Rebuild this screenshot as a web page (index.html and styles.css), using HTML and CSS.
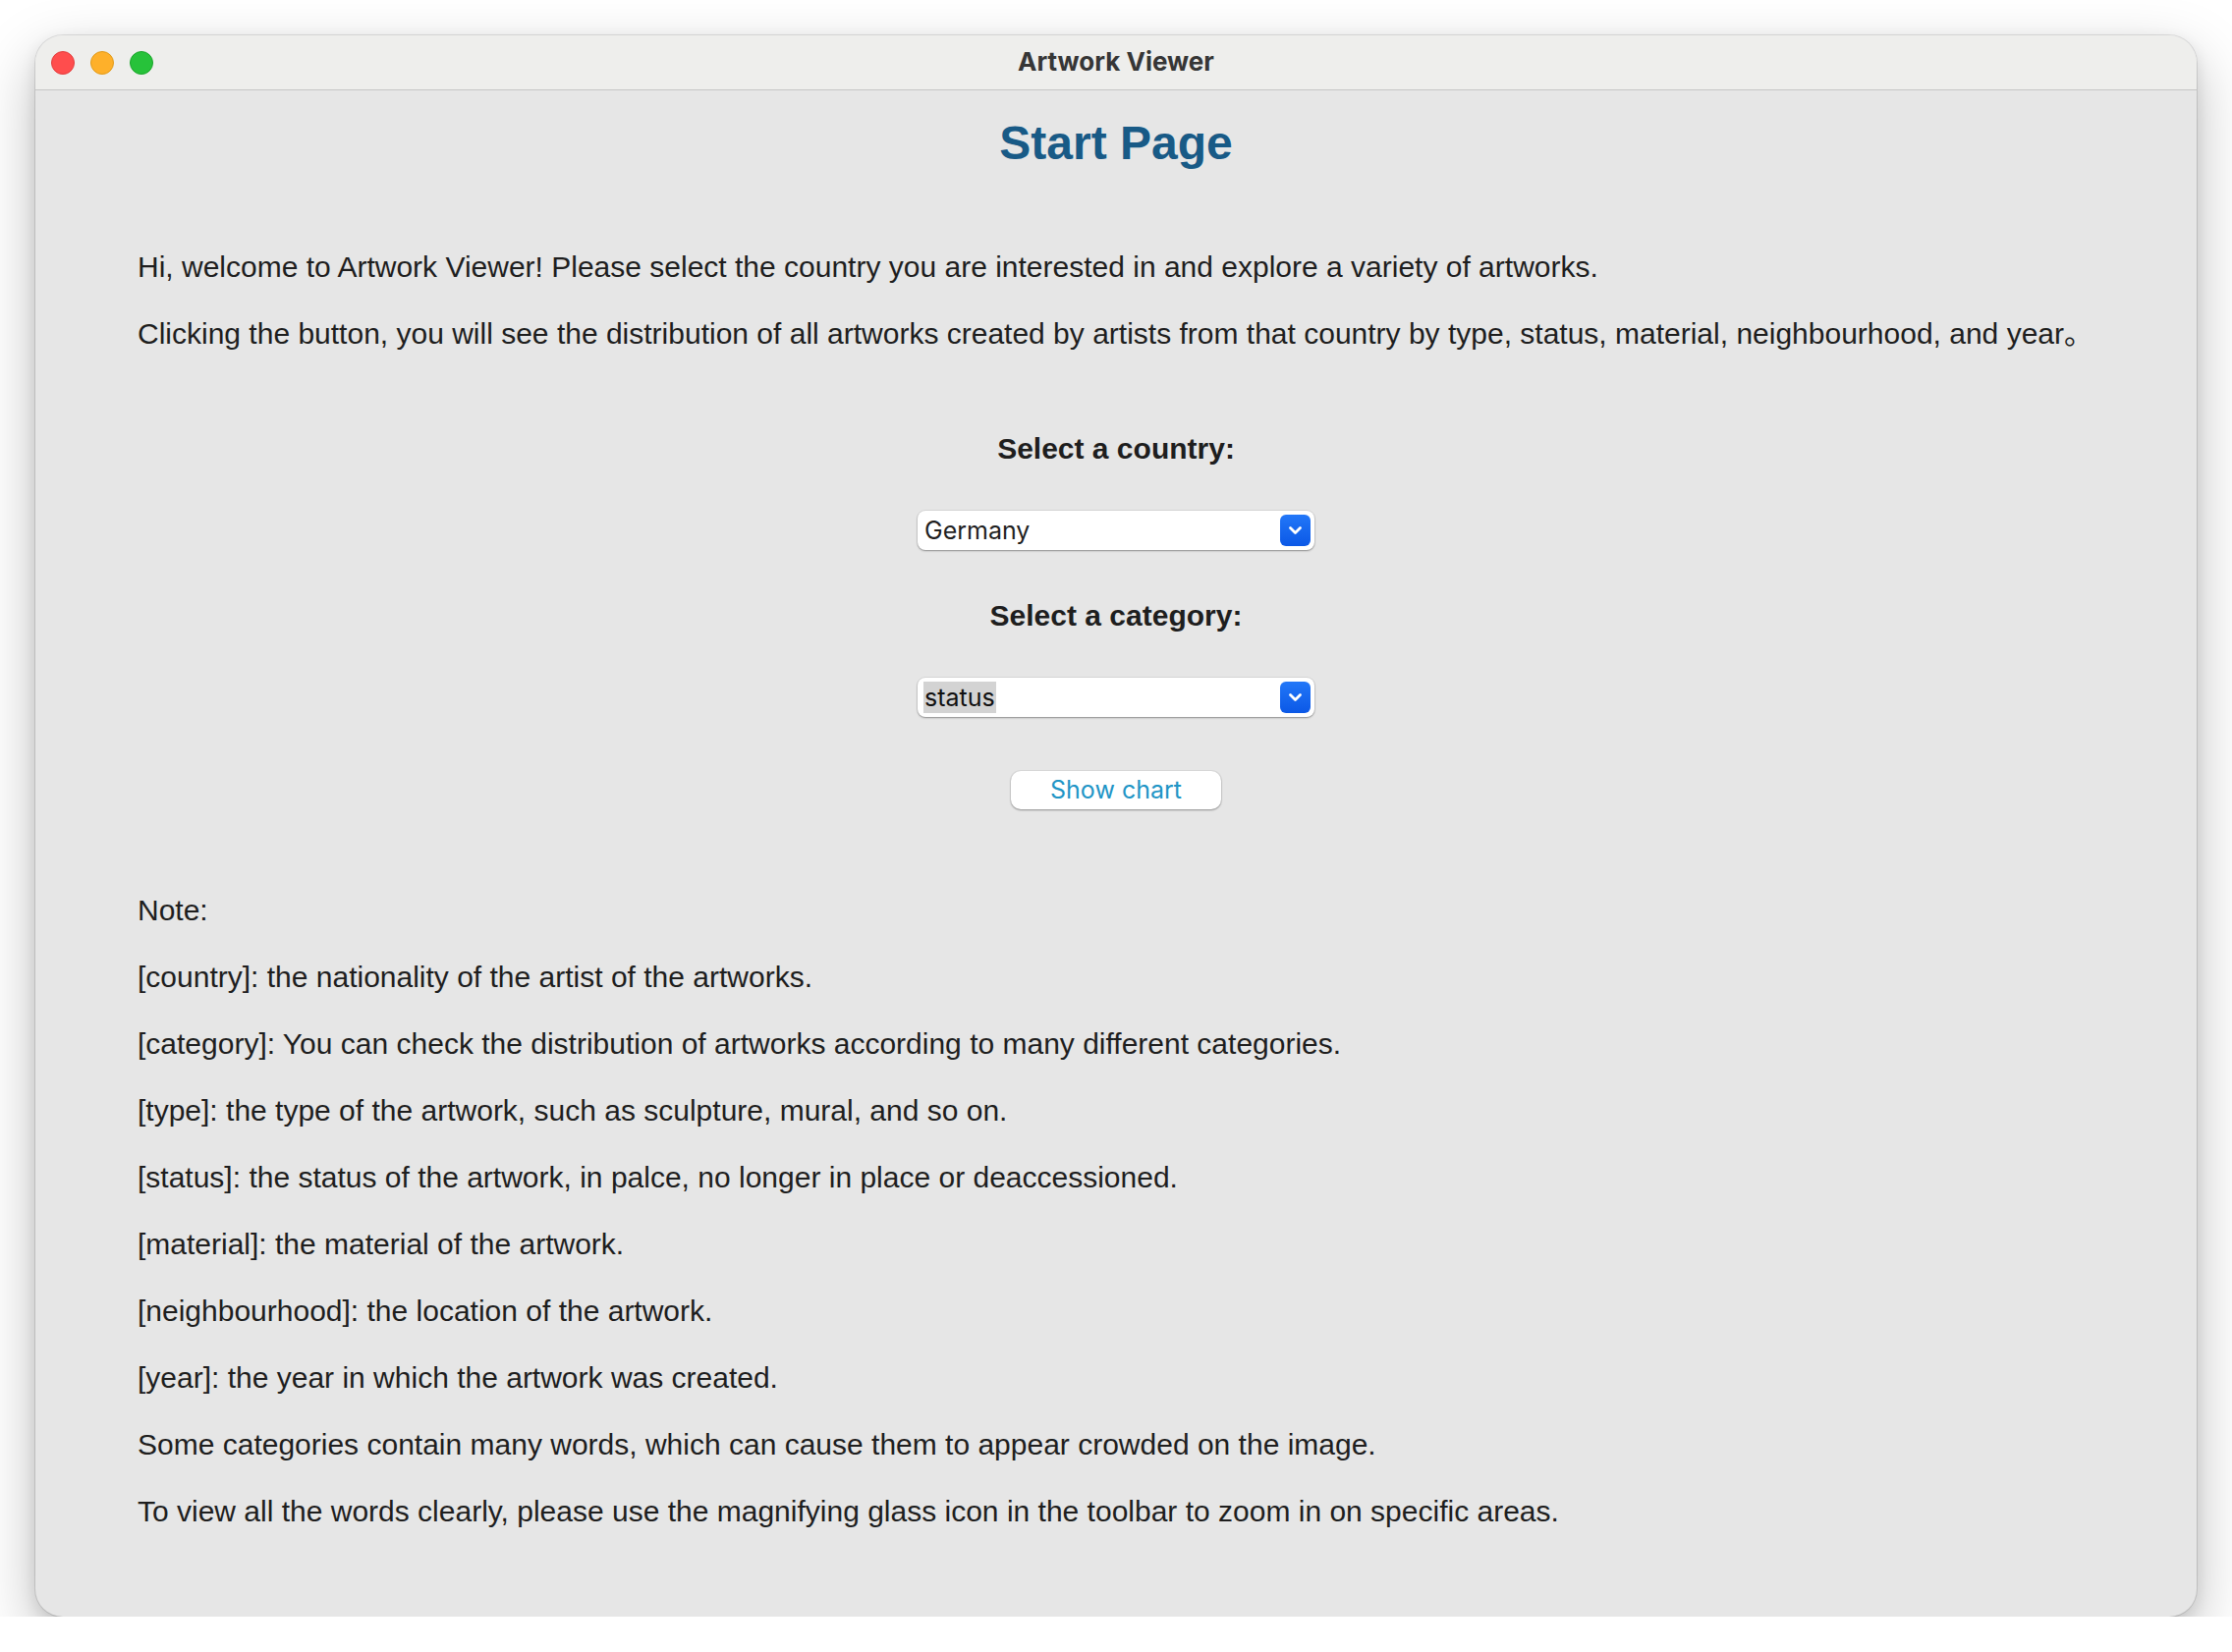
FILE: index.html
```html
<!DOCTYPE html>
<html lang="en">
<head>
<meta charset="utf-8">
<title>Artwork Viewer</title>
<link rel="stylesheet" href="styles.css">
</head>
<body>
<div class="window">
  <div class="titlebar">
    <div class="lights">
      <span class="light red"></span>
      <span class="light yellow"></span>
      <span class="light green"></span>
    </div>
    <div class="wintitle">Artwork Viewer</div>
    <div class="spacer"></div>
  </div>
  <main class="content">
    <h1 class="page-title">Start Page</h1>
    <div class="intro">
      <p class="line">Hi, welcome to Artwork Viewer! Please select the country you are interested in and explore a variety of artworks.</p>
      <p class="line">Clicking the button, you will see the distribution of all artworks created by artists from that country by type, status, material, neighbourhood, and year。</p>
    </div>
    <div class="form">
      <div class="label label-first">Select a country:</div>
      <div class="select">
        <span class="select-value">Germany</span>
        <span class="select-arrow"><svg width="15" height="10" viewBox="0 0 15 10"><path d="M2.5 2.5 L7.5 7.5 L12.5 2.5" fill="none" stroke="#fff" stroke-width="2.8" stroke-linecap="round" stroke-linejoin="round"/></svg></span>
      </div>
      <div class="label label-second">Select a category:</div>
      <div class="select">
        <span class="select-value highlighted">status</span>
        <span class="select-arrow"><svg width="15" height="10" viewBox="0 0 15 10"><path d="M2.5 2.5 L7.5 7.5 L12.5 2.5" fill="none" stroke="#fff" stroke-width="2.8" stroke-linecap="round" stroke-linejoin="round"/></svg></span>
      </div>
      <button class="show-btn">Show chart</button>
    </div>
    <div class="notes">
      <p class="line">Note:</p>
      <p class="line">[country]: the nationality of the artist of the artworks.</p>
      <p class="line">[category]: You can check the distribution of artworks according to many different categories.</p>
      <p class="line">[type]: the type of the artwork, such as sculpture, mural, and so on.</p>
      <p class="line">[status]: the status of the artwork, in palce, no longer in place or deaccessioned.</p>
      <p class="line">[material]: the material of the artwork.</p>
      <p class="line">[neighbourhood]: the location of the artwork.</p>
      <p class="line">[year]: the year in which the artwork was created.</p>
      <p class="line">Some categories contain many words, which can cause them to appear crowded on the image.</p>
      <p class="line">To view all the words clearly, please use the magnifying glass icon in the toolbar to zoom in on specific areas.</p>
    </div>
  </main>
</div>
</body>
</html>
```

FILE: styles.css
```css
html, body {
  margin: 0;
  padding: 0;
  background: #ffffff;
}

body {
  padding: 36px 0 0 36px;
  font-family: "Liberation Sans", Arial, "Noto Sans CJK SC", sans-serif;
}

.window {
  width: 2200px;
  height: 1610px;
  border-radius: 28px;
  overflow: hidden;
  background: #e6e6e6;
  box-shadow: 0 0 0 1px rgba(0, 0, 0, 0.1), 0 22px 60px rgba(0, 0, 0, 0.26), 0 6px 16px rgba(0, 0, 0, 0.1);
  display: flex;
  flex-direction: column;
}

.titlebar {
  height: 55px;
  flex: 0 0 55px;
  background: #eeeeec;
  border-bottom: 1px solid #c6c6c6;
  display: grid;
  grid-template-columns: 1fr auto 1fr;
  align-items: center;
}

.lights {
  display: flex;
  gap: 16px;
  padding-left: 16px;
}

.light {
  width: 22px;
  height: 22px;
  border-radius: 50%;
  display: block;
}

.red { background: #ff4d4d; border: 1px solid #e23c3c; }
.yellow { background: #feb02a; border: 1px solid #e09a19; }
.green { background: #27c23a; border: 1px solid #1aa52a; }

.wintitle {
  font-family: Inter, "Liberation Sans", sans-serif;
  font-weight: 700;
  font-size: 26px;
  color: #363636;
  padding-bottom: 2px;
}

.content {
  flex: 1;
  padding: 26px 0 0 104px;
  color: #1e1e1e;
}

.page-title {
  margin: 0 104px 0 0;
  text-align: center;
  font-size: 48px;
  line-height: 56px;
  font-weight: 700;
  color: #185a86;
}

.intro {
  margin-top: 64px;
}

.line {
  margin: 0;
  font-size: 30px;
  line-height: 68px;
  white-space: nowrap;
}

.form {
  margin-right: 104px;
  display: flex;
  flex-direction: column;
  align-items: center;
}

.label {
  font-size: 30px;
  line-height: 40px;
  font-weight: 700;
  color: #1e1e1e;
}

.label-first { margin-top: 63px; }
.label-second { margin-top: 47px; }

.select {
  margin-top: 43px;
  width: 404px;
  height: 40px;
  box-sizing: border-box;
  background: #ffffff;
  border-radius: 8px;
  box-shadow: 0 0 0 1px rgba(0, 0, 0, 0.06), 0 1px 2px rgba(0, 0, 0, 0.35);
  display: flex;
  align-items: center;
  justify-content: space-between;
  padding: 0 4px 0 6px;
}

.select-value {
  font-family: Inter, "Liberation Sans", sans-serif;
  font-size: 25px;
  line-height: 32px;
  color: #1f1f1f;
  padding: 0 1px;
}

.select-value.highlighted {
  background: #d3d3d3;
  color: #111;
}

.select-arrow {
  width: 31px;
  height: 32px;
  border-radius: 6px;
  background: linear-gradient(#2277f8, #0b58e6);
  display: flex;
  align-items: center;
  justify-content: center;
}

.show-btn {
  margin-top: 55px;
  width: 214px;
  height: 39px;
  border: none;
  border-radius: 10px;
  background: #ffffff;
  box-shadow: 0 0 0 1px rgba(0, 0, 0, 0.05), 0 1px 2px rgba(0, 0, 0, 0.35);
  font-family: Inter, "Liberation Sans", sans-serif;
  font-size: 25px;
  color: #1f95c6;
  padding: 0;
  line-height: 39px;
}

.notes {
  margin-top: 69px;
}
```
